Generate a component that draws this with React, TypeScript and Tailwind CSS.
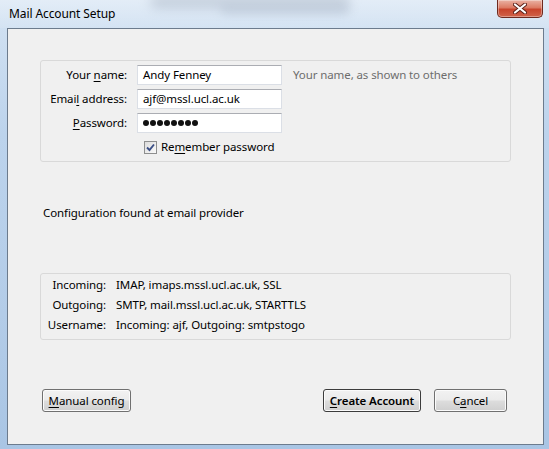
import React from "react";

const font = { fontFamily: '"Segoe UI", "Noto Sans", "DejaVu Sans", sans-serif' };

function Key({ children }: { children: React.ReactNode }) {
  return <span className="underline underline-offset-[2px]">{children}</span>;
}

function Field({ children }: { children: React.ReactNode }) {
  return (
    <div className="ml-[10px] w-[145px] h-[20px] flex items-center pl-[5px] bg-white border border-[#dbdfe6] border-t-[#abadb3]">
      {children}
    </div>
  );
}

function Button({
  children,
  width,
  primary = false,
}: {
  children: React.ReactNode;
  width: string;
  primary?: boolean;
}) {
  return (
    <button
      type="button"
      className={`${width} h-[23px] flex items-center justify-center rounded-[3px] border ${
        primary ? "border-[#3c3c3c] font-semibold" : "border-[#707070]"
      } bg-[linear-gradient(to_bottom,#f2f2f2_0%,#ebebeb_48%,#dddddd_52%,#cfcfcf_100%)] shadow-[inset_0_0_0_1px_#fbfbfb] text-[11.5px] tracking-[-0.1px] text-black leading-none`}
    >
      {children}
    </button>
  );
}

function Checkbox() {
  return (
    <span className="w-[13px] h-[13px] border border-[#8e8f8f] bg-[linear-gradient(135deg,#dcdcdc,#fafafa)] flex items-center justify-center">
      <svg width="9" height="9" viewBox="0 0 9 9">
        <path d="M1 4.5 L3.5 7 L8 1.5" fill="none" stroke="#3b4f86" strokeWidth="1.9" />
      </svg>
    </span>
  );
}

export default function App() {
  return (
    <div
      className="relative w-[549px] h-[449px] overflow-hidden flex flex-col bg-[linear-gradient(to_bottom,#d4e3f3_0%,#bcd3ec_30%,#b3cce8_70%,#a9c5e4_100%)] text-[11.5px] tracking-[-0.1px] text-black"
      style={font}
    >
      {/* glass blur */}
      <div className="absolute left-[150px] top-[-6px] w-[200px] h-[14px] rounded-full bg-[#7d8ea5] opacity-50 blur-[6px]" />
      <div className="absolute left-[220px] top-[4px] w-[130px] h-[10px] rounded-full bg-[#8e9fb6] opacity-40 blur-[5px]" />
      <div className="absolute left-[0px] top-[0px] w-[549px] h-[28px] bg-[linear-gradient(to_bottom,rgba(255,255,255,0.35),rgba(255,255,255,0.1))]" />

      {/* title bar */}
      <div className="relative h-[28px] flex items-start">
        <span className="ml-[9px] mt-[6px] leading-[16px] text-[12px]">Mail Account Setup</span>
        <div className="ml-auto mr-[6px] w-[46px] h-[18px] rounded-b-[5px] border border-t-0 border-[#6e2a1f] bg-[linear-gradient(to_bottom,#eab2a4_0%,#dc7a63_45%,#c8442c_55%,#d0634a_100%)] shadow-[inset_0_0_0_1px_rgba(255,255,255,0.35)] flex items-center justify-center">
          <svg width="14" height="11" viewBox="0 0 14 11">
            <path d="M2 1.5 L12 9.5 M12 1.5 L2 9.5" stroke="#5a2018" strokeWidth="4" strokeLinecap="round" />
            <path d="M2 1.5 L12 9.5 M12 1.5 L2 9.5" stroke="#ffffff" strokeWidth="2.2" strokeLinecap="round" />
          </svg>
        </div>
      </div>

      {/* client area */}
      <div className="relative ml-[7px] mr-[5px] mb-[4px] flex-1 border border-[#6c7b8d] bg-[#f0f0f0] flex flex-col pl-[32px] pr-[32px]">
        <div className="mt-[31px] h-[102px] border border-[#d9d9d9] rounded-[3px] flex flex-col pt-[4px]">
          <div className="flex items-center h-[20px]">
            <span className="w-[86px] text-right">
              Your <Key>n</Key>ame:
            </span>
            <Field>Andy Fenney</Field>
            <span className="ml-[11px] text-[#6d6d6d]">Your name, as shown to others</span>
          </div>
          <div className="flex items-center h-[20px] mt-[4px]">
            <span className="w-[86px] text-right">
              Emai<Key>l</Key> address:
            </span>
            <Field>ajf@mssl.ucl.ac.uk</Field>
          </div>
          <div className="flex items-center h-[20px] mt-[4px]">
            <span className="w-[86px] text-right">
              <Key>P</Key>assword:
            </span>
            <Field>
              <span className="flex gap-[1px]" aria-label="password">
                {[0, 1, 2, 3, 4, 5, 6, 7].map((i) => (
                  <span key={i} className="w-[6px] h-[6px] rounded-full bg-[#111]" />
                ))}
              </span>
            </Field>
          </div>
          <div className="flex items-center h-[20px] mt-[4px] pl-[103px] gap-[4px]">
            <Checkbox />
            <span>
              Re<Key>m</Key>ember password
            </span>
          </div>
        </div>

        <div className="mt-[43px] h-[16px] leading-[16px] pl-[3px]">Configuration found at email provider</div>

        <div className="mt-[52px] h-[67px] border border-[#d9d9d9] rounded-[3px] flex flex-col pt-[1px]">
          {[
            ["Incoming:", "IMAP, imaps.mssl.ucl.ac.uk, SSL"],
            ["Outgoing:", "SMTP, mail.mssl.ucl.ac.uk, STARTTLS"],
            ["Username:", "Incoming: ajf, Outgoing: smtpstogo"],
          ].map(([label, value]) => (
            <div key={label} className="flex items-center h-[20px]">
              <span className="w-[65px] text-right">{label}</span>
              <span className="ml-[10px]">{value}</span>
            </div>
          ))}
        </div>

        <div className="mt-[49px] flex items-center">
          <div className="ml-[2px]">
            <Button width="w-[89px]">
              <Key>M</Key>anual config
            </Button>
          </div>
          <div className="ml-auto mr-[4px] flex gap-[13px]">
            <Button width="w-[98px]" primary>
              <Key>C</Key>reate Account
            </Button>
            <Button width="w-[73px]">
              C<Key>a</Key>ncel
            </Button>
          </div>
        </div>
      </div>
    </div>
  );
}
